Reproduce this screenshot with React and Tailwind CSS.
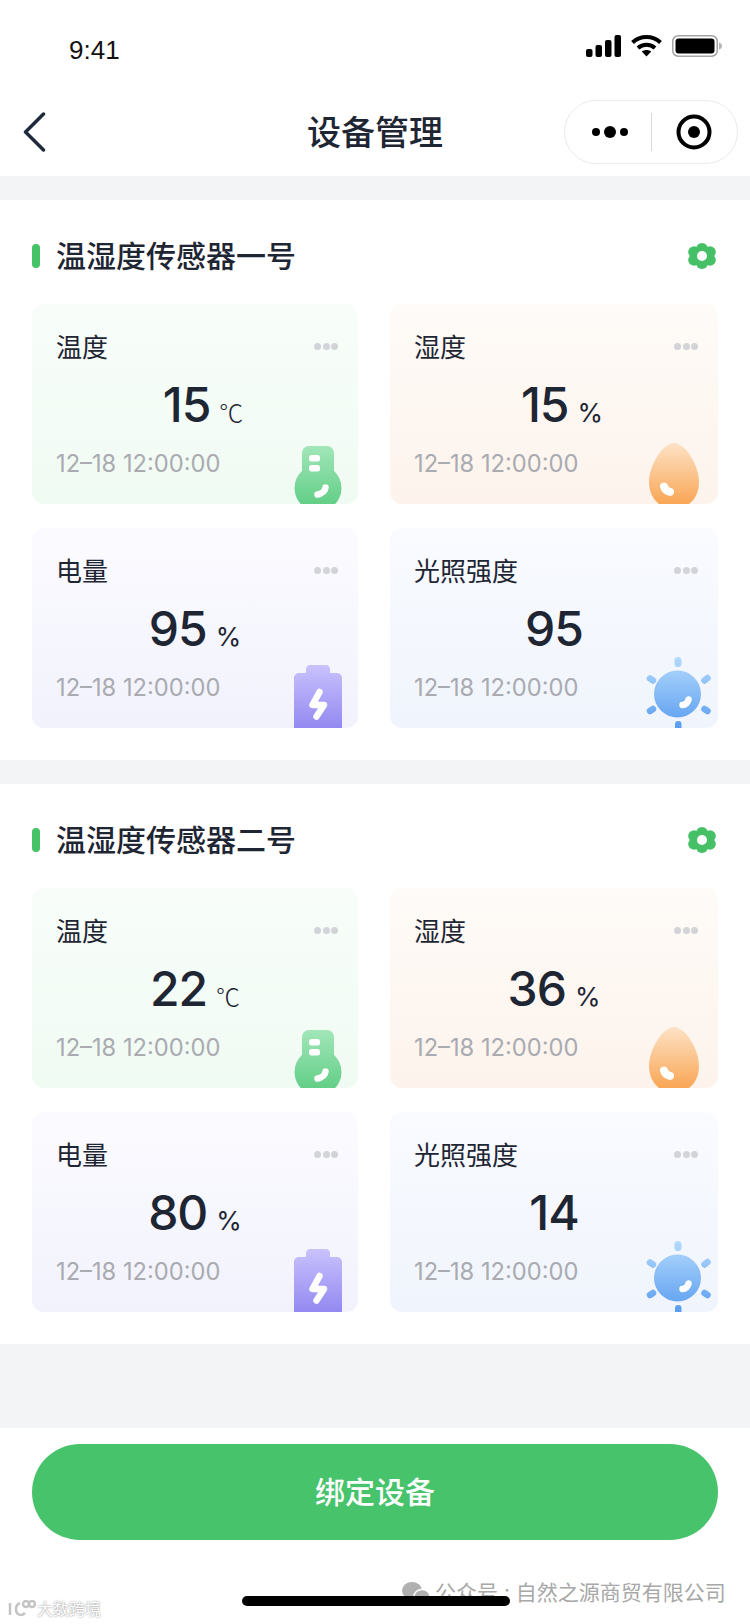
import React from "react";

const SECTIONS = [
  {
    name: "温湿度传感器一号",
    values: { temp: "15", humidity: "15", power: "95", light: "95" },
  },
  {
    name: "温湿度传感器二号",
    values: { temp: "22", humidity: "36", power: "80", light: "14" },
  },
];

const Signal = () => (
  <svg width="35" height="22" viewBox="0 0 35 22" fill="#000">
    <rect x="0" y="14" width="6.5" height="8" rx="2" />
    <rect x="9.5" y="10" width="6.5" height="12" rx="2" />
    <rect x="19" y="5" width="6.5" height="17" rx="2" />
    <rect x="28.5" y="0" width="6.5" height="22" rx="2" />
  </svg>
);

const Wifi = () => (
  <svg width="31" height="22" viewBox="0 0 31 22" fill="none" stroke="#000" strokeWidth="4">
    <path d="M1.5 7.5C9.5 0.2 21.5 0.2 29.5 7.5" />
    <path d="M7 13C11.8 8.8 19.2 8.8 24 13" />
    <path d="M15.5 21.5L10.8 16.6C13.4 14.6 17.6 14.6 20.2 16.6Z" fill="#000" stroke="none" />
  </svg>
);

const Battery = () => (
  <svg width="50" height="22" viewBox="0 0 50 22" fill="none">
    <rect x="0.75" y="0.75" width="44.5" height="20.5" rx="5.5" stroke="#a3a3a3" strokeWidth="1.5" />
    <rect x="3.5" y="3.5" width="39" height="15" rx="3" fill="#000" />
    <path d="M47 7.5C48.8 8 50 9.3 50 11C50 12.7 48.8 14 47 14.5Z" fill="#b5b5b5" />
  </svg>
);

const Gear = () => (
  <svg className="mr-[2px]" width="28" height="26" viewBox="0 0 28 26" fill="#45c066">
    <circle cx="14" cy="6" r="6" />
    <circle cx="14" cy="20" r="6" />
    <circle cx="6" cy="9" r="5.8" />
    <circle cx="22" cy="9" r="5.8" />
    <circle cx="6" cy="17" r="5.8" />
    <circle cx="22" cy="17" r="5.8" />
    <circle cx="14" cy="13" r="7.5" />
    <circle cx="14" cy="13" r="5" fill="#fff" />
  </svg>
);

// icons below use page coordinates of the first section in their viewBox
const ThermoIcon = () => (
  <svg className="absolute right-0 bottom-0" width="70" height="74" viewBox="288 430 70 74">
    <defs>
      <linearGradient id="thermoFill" gradientUnits="userSpaceOnUse" x1="0" y1="446" x2="0" y2="504">
        <stop offset="0" stopColor="#a2e6b9" />
        <stop offset="1" stopColor="#63cf87" />
      </linearGradient>
    </defs>
    <rect x="302" y="446" width="32" height="44" rx="7" fill="url(#thermoFill)" />
    <circle cx="318" cy="488" r="23.5" fill="url(#thermoFill)" />
    <rect x="309" y="455" width="11" height="6.5" rx="2.5" fill="#fff" />
    <rect x="309" y="465" width="11" height="6.5" rx="2.5" fill="#fff" />
    <path d="M317.5 494.5C321.5 494 325 491 325.5 487.5" fill="none" stroke="#fff" strokeWidth="6.5" strokeLinecap="round" />
  </svg>
);

const DropIcon = () => (
  <svg className="absolute right-0 bottom-0" width="70" height="74" viewBox="648 430 70 74">
    <defs>
      <linearGradient id="dropFill" gradientUnits="userSpaceOnUse" x1="0" y1="443" x2="0" y2="504">
        <stop offset="0" stopColor="#fde2c6" />
        <stop offset="1" stopColor="#f9a655" />
      </linearGradient>
    </defs>
    <path
      d="M674 443C663 443 649 465 649 482C649 498 660 509 674 509C688 509 699 498 699 482C699 465 685 443 674 443Z"
      fill="url(#dropFill)"
    />
    <path d="M664 486.5C664.8 489 667 491.2 670 491.8" fill="none" stroke="#fff" strokeWidth="8" strokeLinecap="round" />
  </svg>
);

const BatteryIcon = () => (
  <svg className="absolute right-0 bottom-0" width="70" height="74" viewBox="288 654 70 74">
    <defs>
      <linearGradient id="batteryFill" gradientUnits="userSpaceOnUse" x1="0" y1="665" x2="0" y2="728">
        <stop offset="0" stopColor="#c9c2fd" />
        <stop offset="1" stopColor="#9389f1" />
      </linearGradient>
    </defs>
    <path
      d="M306 673V669C306 666.8 307.8 665 310 665H326C328.2 665 330 666.8 330 669V673H337C339.8 673 342 675.2 342 678V728H294V678C294 675.2 296.2 673 299 673Z"
      fill="url(#batteryFill)"
    />
    <path d="M319.5 692L312.5 705H324L316.5 716.5" fill="none" stroke="#fff" strokeWidth="6.5" strokeLinecap="round" strokeLinejoin="round" />
  </svg>
);

const SunIcon = () => (
  <svg className="absolute right-0 bottom-0" width="80" height="74" viewBox="638 654 80 74">
    <defs>
      <linearGradient id="sunFill" gradientUnits="userSpaceOnUse" x1="0" y1="657" x2="0" y2="728">
        <stop offset="0" stopColor="#b4dafc" />
        <stop offset="1" stopColor="#5a9df0" />
      </linearGradient>
    </defs>
    <g fill="url(#sunFill)">
      <circle cx="677.5" cy="694" r="23.5" />
      <rect x="674.5" y="657" width="7" height="10" rx="3.5" />
      <rect x="675" y="721" width="6.5" height="12" rx="3" />
    </g>
    <g fill="none" stroke="url(#sunFill)" strokeWidth="6.5" strokeLinecap="round">
      <path d="M650 678.5L653 680.5" />
      <path d="M704.5 680.5L707.5 678" />
      <path d="M650 711L653 709" />
      <path d="M704.5 709L707.5 711" />
    </g>
    <path d="M682.5 705C685.5 705 688 702.5 688.5 699.5" fill="none" stroke="#fff" strokeWidth="6.5" strokeLinecap="round" />
  </svg>
);

const CARDS = [
  {
    key: "temp",
    label: "温度",
    unit: "℃",
    unitClass: "text-[24px] font-['Noto_Sans_CJK_SC',sans-serif] font-light",
    bg: "bg-linear-to-b from-[#f8fdfa] to-[#f0fbf3]",
    Icon: ThermoIcon,
  },
  { key: "humidity", label: "湿度", unit: "%", unitClass: "text-[26px]", bg: "bg-linear-to-b from-[#fefbf8] to-[#fdf3ec]", Icon: DropIcon },
  { key: "power", label: "电量", unit: "%", unitClass: "text-[26px]", bg: "bg-linear-to-b from-[#fbfbff] to-[#f2f2fd]", Icon: BatteryIcon },
  { key: "light", label: "光照强度", unit: "", unitClass: "", bg: "bg-linear-to-b from-[#f9fbff] to-[#f0f4fc]", Icon: SunIcon },
];

const DeviceCard = ({ card, value }) => {
  const { label, unit, unitClass, bg, Icon } = card;
  return (
    <div className={`relative h-[200px] overflow-hidden rounded-xl pt-[26px] ${bg}`}>
      <div className="flex h-[36px] items-center justify-between pl-[24px] pr-[20px]">
        <span className="text-[26px] leading-[36px] text-[#1e2533]">{label}</span>
        <div className="mb-1 flex gap-[1.5px]">
          <span className="h-[7px] w-[7px] rounded-full bg-[#d3d4d8]" />
          <span className="h-[7px] w-[7px] rounded-full bg-[#d3d4d8]" />
          <span className="h-[7px] w-[7px] rounded-full bg-[#d3d4d8]" />
        </div>
      </div>
      <div className={`mt-[11px] flex h-[56px] items-baseline justify-center ${value === "15" ? "pl-4" : ""}`}>
        <span className="text-[48px] font-medium leading-[56px] tracking-[-1px] text-[#1e2533]">{value}</span>
        {unit && <span className={`ml-[9px] leading-[56px] text-[#1e2533] ${unitClass}`}>{unit}</span>}
      </div>
      <div className="mt-[13px] pl-[24px] text-[23.7px] leading-[36px] text-[#a9abb1]">12–18 12:00:00</div>
      <Icon />
    </div>
  );
};

const DeviceSection = ({ section }) => (
  <section className="bg-white px-8 pb-8 pt-9">
    <div className="flex h-10 items-center justify-between">
      <div className="flex items-center">
        <span className="h-6 w-2 rounded-full bg-[#45c366]" />
        <h2 className="ml-4 text-[30px] font-medium text-[#1e2533]">{section.name}</h2>
      </div>
      <Gear />
    </div>
    <div className="mt-7 grid grid-cols-[326px_328px] gap-x-8 gap-y-6">
      {CARDS.map((card) => (
        <DeviceCard key={card.key} card={card} value={section.values[card.key]} />
      ))}
    </div>
  </section>
);

export default function App() {
  return (
    <div className="relative flex h-[1624px] w-[750px] flex-col overflow-hidden bg-[#f3f4f6] font-['Inter','Noto_Sans_CJK_SC',sans-serif]">
      {/* status bar */}
      <div className="flex h-[88px] items-start justify-between bg-white pl-[69px] pr-[28px] pt-[35px]">
        <span className="font-['Liberation_Sans',sans-serif] text-[26px] leading-[30px] text-[#111]">9:41</span>
        <div className="flex items-center gap-[10px]">
          <Signal />
          <Wifi />
          <Battery />
        </div>
      </div>

      {/* nav bar */}
      <div className="relative flex h-[88px] items-center justify-center bg-white">
        <svg className="absolute left-[22px] top-[24px]" width="26" height="40" viewBox="0 0 26 40" fill="none">
          <path d="M21.5 2L3.5 20L21.5 38" stroke="#1e2a3e" strokeWidth="3.5" strokeLinecap="round" strokeLinejoin="round" />
        </svg>
        <h1 className="text-[34px] font-medium text-[#1e2533]">设备管理</h1>
        <div className="absolute left-[564px] top-[12px] flex h-16 w-[174px] items-center rounded-full border border-[#ebebed] bg-white">
          <svg className="ml-[26px]" width="38" height="14" viewBox="0 0 38 14" fill="#000">
            <circle cx="5" cy="7" r="4" />
            <circle cx="19" cy="7" r="6" />
            <circle cx="33" cy="7" r="4" />
          </svg>
          <span className="ml-[22px] h-[38px] w-px bg-[#d9d9d9]" />
          <svg className="ml-[24px]" width="36" height="36" viewBox="0 0 36 36" fill="none">
            <circle cx="18" cy="18" r="15.5" stroke="#000" strokeWidth="4" />
            <circle cx="18" cy="18" r="6" fill="#000" />
          </svg>
        </div>
      </div>

      <div className="mt-6 flex flex-col gap-6">
        {SECTIONS.map((section) => (
          <DeviceSection key={section.name} section={section} />
        ))}
      </div>

      <div className="flex-1" />

      <div className="h-[196px] bg-white px-8 pt-4">
        <button className="flex h-24 w-full items-center justify-center rounded-full bg-[#47c36b] text-[30px] font-medium text-white">
          绑定设备
        </button>
      </div>

      {/* screenshot watermarks */}
      <div className="absolute left-[402px] top-[1580px] flex items-center text-[#a8a8a8]">
        <svg width="28" height="22" viewBox="0 0 28 22" fill="#b0b0b0">
          <ellipse cx="10" cy="8.5" rx="10" ry="8.5" />
          <path d="M4 14L3 19L9 16Z" />
          <ellipse cx="20" cy="14.5" rx="8" ry="7" stroke="#fff" strokeWidth="1.5" />
        </svg>
        <span className="ml-[5px] whitespace-nowrap text-[21px] leading-[26px]">公众号 : 自然之源商贸有限公司</span>
      </div>
      <div className="absolute left-[242px] top-[1596px] h-[10px] w-[268px] rounded-full bg-black" />
      <div className="absolute left-[8px] top-[1599px] flex items-center text-white [text-shadow:0_0_2px_#777]">
        <svg width="28" height="18" viewBox="0 0 28 18" fill="none" stroke="#c4c4c4" strokeWidth="2.5">
          <path d="M2 3V15" />
          <path d="M12 3C7 5 6 14 13 15C15 15 16 14 17 13" />
          <circle cx="18" cy="4" r="3" />
          <circle cx="24" cy="4" r="3" />
        </svg>
        <span className="ml-[1px] whitespace-nowrap text-[16px] leading-[20px]">大数跨境</span>
      </div>
    </div>
  );
}
